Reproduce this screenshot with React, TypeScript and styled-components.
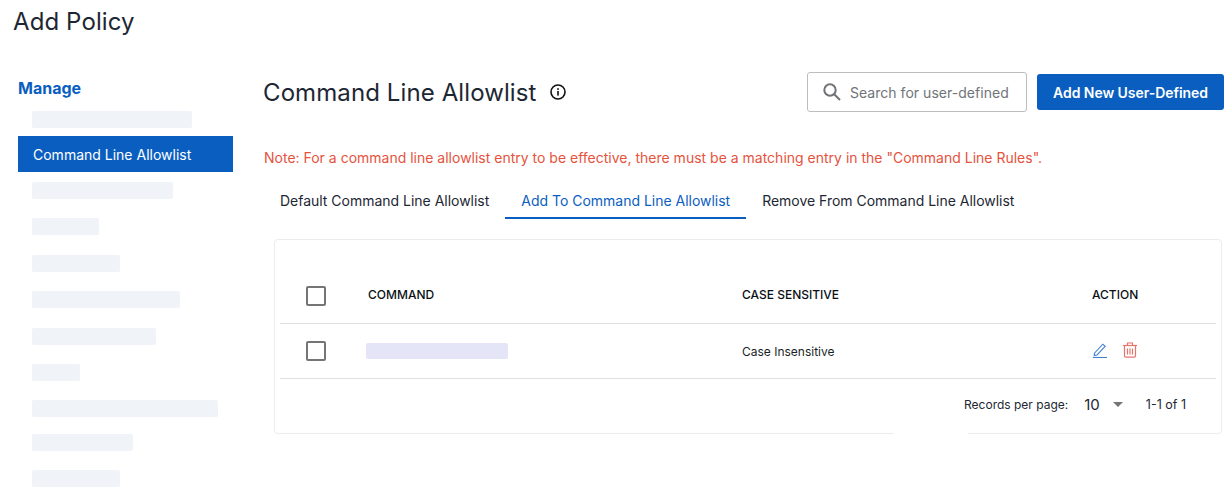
import React from 'react';
import styled, { createGlobalStyle } from 'styled-components';

const GlobalStyle = createGlobalStyle`
  html, body {
    margin: 0;
    padding: 0;
    background: #fff;
    overflow: hidden;
  }
  body {
    font-family: Inter, "Noto Sans", sans-serif;
    color: #1d2733;
  }
  * {
    box-sizing: border-box;
  }
`;

const NAV_ITEMS = [
  { width: 160, gap: 8 },
  { active: true, label: 'Command Line Allowlist', gap: 10 },
  { width: 141, gap: 19 },
  { width: 67, gap: 20 },
  { width: 88, gap: 19 },
  { width: 148, gap: 20 },
  { width: 124, gap: 19 },
  { width: 48, gap: 19 },
  { width: 186, gap: 17 },
  { width: 101, gap: 19 },
  { width: 88, gap: 0 },
];

const TABS = ['Default Command Line Allowlist', 'Add To Command Line Allowlist', 'Remove From Command Line Allowlist'];

export default function App() {
  return (
    <Page>
      <GlobalStyle />
      <PageTitle>Add Policy</PageTitle>
      <Body>
        <Sidebar>
          <SidebarTitle>Manage</SidebarTitle>
          {NAV_ITEMS.map((item, idx) =>
            item.active ? (
              <ActiveItem key={idx} $gap={item.gap}>
                {item.label}
              </ActiveItem>
            ) : (
              <NavBar key={idx} $width={item.width as number} $gap={item.gap} />
            ),
          )}
        </Sidebar>
        <Main>
          <TopRow>
            <Heading>
              <h2>Command Line Allowlist</h2>
              <svg width="16" height="16" viewBox="0 0 16 16" fill="none">
                <circle cx="8" cy="8" r="7" stroke="#111" strokeWidth="1.6" />
                <rect x="7.2" y="7" width="1.6" height="4.6" fill="#111" />
                <rect x="7.2" y="4.2" width="1.6" height="1.7" fill="#111" />
              </svg>
            </Heading>
            <Actions>
              <SearchBox>
                <svg width="20" height="20" viewBox="0 0 20 20" fill="none">
                  <circle cx="8" cy="8" r="5.7" stroke="#6f7276" strokeWidth="2" />
                  <path d="M12.2 12.2 L18 18" stroke="#6f7276" strokeWidth="2" />
                </svg>
                <span>Search for user-defined</span>
              </SearchBox>
              <PrimaryButton>Add New User-Defined</PrimaryButton>
            </Actions>
          </TopRow>
          <Note>
            Note: For a command line allowlist entry to be effective, there must be a matching entry in the "Command Line Rules".
          </Note>
          <Tabs>
            {TABS.map((tab, idx) => (
              <Tab key={tab} $active={idx === 1}>
                {tab}
              </Tab>
            ))}
          </Tabs>
          <Card>
            <HeaderRow>
              <Checkbox />
              <HeadCell>COMMAND</HeadCell>
              <HeadCell>CASE SENSITIVE</HeadCell>
              <HeadCell>ACTION</HeadCell>
            </HeaderRow>
            <DataRow>
              <Checkbox />
              <CommandBar />
              <Cell>Case Insensitive</Cell>
              <IconCell>
                <svg width="16" height="16" viewBox="0 0 16 16" fill="none">
                  <path d="M2.6 11 L10.8 2.2 L13.2 4.4 L5 13 L2.2 13.6 Z" stroke="#3f7fd4" strokeWidth="1.1" />
                  <path d="M0.8 15.5 H15" stroke="#3f7fd4" strokeWidth="1.1" />
                </svg>
                <svg width="16" height="16" viewBox="0 0 16 16" fill="none">
                  <path d="M1 3.5 H15" stroke="#e8736c" strokeWidth="1.2" />
                  <path d="M5.5 3.5 V1 H10.5 V3.5" stroke="#e8736c" strokeWidth="1.2" />
                  <path d="M2.5 3.5 V14 Q2.5 15.2 3.7 15.2 H12.3 Q13.5 15.2 13.5 14 V3.5" stroke="#e8736c" strokeWidth="1.2" />
                  <path d="M5.5 6.5 V12.5 M8 6.5 V12.5 M10.5 6.5 V12.5" stroke="#e8736c" strokeWidth="1.2" />
                </svg>
              </IconCell>
            </DataRow>
            <Pagination>
              <span>Records per page:</span>
              <PageSize>10</PageSize>
              <Caret />
              <PageRange>1-1 of 1</PageRange>
            </Pagination>
            <BorderGap />
          </Card>
        </Main>
      </Body>
    </Page>
  );
}

const Page = styled.div`
  width: 1231px;
  height: 491px;
  overflow: hidden;
  padding-top: 7px;
`;

const PageTitle = styled.h1`
  margin: 0 0 0 13px;
  font-size: 24px;
  line-height: 30px;
  font-weight: 400;
  letter-spacing: 0.1px;
  color: #1d2733;
`;

const Body = styled.div`
  display: flex;
  margin-top: 35px;
  padding-left: 18px;
`;

const Sidebar = styled.nav`
  width: 215px;
  padding-top: 6px;
  flex-shrink: 0;
  display: flex;
  flex-direction: column;
  align-items: flex-start;
`;

const SidebarTitle = styled.div`
  font-size: 16px;
  line-height: 20px;
  font-weight: 700;
  color: #0a5ec0;
  margin-bottom: 13px;
`;

const NavBar = styled.div<{ $width: number; $gap: number }>`
  width: ${(p) => p.$width}px;
  height: 17px;
  margin-left: 14px;
  margin-bottom: ${(p) => p.$gap}px;
  border-radius: 2px;
  background: #f0f3f8;
  flex-shrink: 0;
`;

const ActiveItem = styled.div<{ $gap: number }>`
  width: 215px;
  height: 36px;
  padding-left: 15px;
  margin-bottom: ${(p) => p.$gap}px;
  display: flex;
  align-items: center;
  background: #0a5ec0;
  color: #fff;
  font-size: 14px;
`;

const Main = styled.main`
  margin-left: 30px;
  width: 961px;
`;

const TopRow = styled.div`
  display: flex;
  justify-content: space-between;
  align-items: center;
  height: 40px;
`;

const Heading = styled.div`
  display: flex;
  align-items: center;
  gap: 13px;

  h2 {
    margin: 0;
    padding-top: 1px;
    font-size: 24px;
    line-height: 32px;
    font-weight: 400;
    letter-spacing: 0.1px;
    color: #1d2733;
  }
`;

const Actions = styled.div`
  display: flex;
  align-items: center;
  gap: 10px;
`;

const SearchBox = styled.div`
  width: 220px;
  height: 40px;
  padding-left: 14px;
  display: flex;
  align-items: center;
  gap: 8px;
  border: 1px solid #bdbdbd;
  border-radius: 3px;
  font-size: 14px;
  letter-spacing: 0.03px;
  color: #707479;
`;

const PrimaryButton = styled.button`
  width: 187px;
  height: 36px;
  border: 0;
  border-radius: 3px;
  padding: 0;
  background: #0a5ec0;
  color: #fff;
  font-family: inherit;
  font-size: 14px;
  font-weight: 600;
  letter-spacing: -0.05px;
`;

const Note = styled.p`
  margin: 36px 0 0 1px;
  font-size: 14px;
  line-height: 20px;
  color: #e5533d;
`;

const Tabs = styled.div`
  display: flex;
  margin: 15px 0 0 1px;
`;

const Tab = styled.div<{ $active: boolean }>`
  height: 36px;
  padding: 0 16px;
  display: flex;
  align-items: center;
  font-size: 14px;
  letter-spacing: -0.015px;
  color: ${(p) => (p.$active ? '#0a5ec0' : '#1d2733')};
  border-bottom: 2px solid ${(p) => (p.$active ? '#0a5ec0' : 'transparent')};
`;

const Card = styled.section`
  position: relative;
  margin: 20px 0 0 11px;
  width: 948px;
  height: 195px;
  padding: 0 5px;
  border: 1px solid #ececec;
  border-radius: 4px;
`;

const rowColumns = `
  display: grid;
  grid-template-columns: 62px 374px 350px 1fr;
  align-items: center;
  padding-left: 26px;
  border-bottom: 1px solid #e0e0e0;
`;

const HeaderRow = styled.div`
  ${rowColumns}
  height: 84px;
  padding-top: 28px;
`;

const DataRow = styled.div`
  ${rowColumns}
  height: 55px;
`;

const Checkbox = styled.span`
  width: 20px;
  height: 20px;
  border: 2px solid #757575;
  border-radius: 2px;
`;

const HeadCell = styled.div`
  padding-bottom: 2px;
  font-size: 12px;
  font-weight: 500;
  color: #0b0f14;
`;

const CommandBar = styled.div`
  width: 142px;
  height: 16px;
  margin-left: -2px;
  border-radius: 2px;
  background: #e4e6f7;
`;

const Cell = styled.div`
  font-size: 12px;
  color: #1a1f26;
`;

const IconCell = styled.div`
  display: flex;
  gap: 14px;
  padding-bottom: 2px;
`;

const Pagination = styled.div`
  height: 50px;
  padding-right: 30px;
  display: flex;
  justify-content: flex-end;
  align-items: center;
  font-size: 12px;
  color: #1d2733;
`;

const PageSize = styled.span`
  margin-left: 16px;
  font-size: 15px;
`;

const Caret = styled.span`
  width: 0;
  height: 0;
  margin-left: 13px;
  border-left: 5.5px solid transparent;
  border-right: 5.5px solid transparent;
  border-top: 5px solid #757575;
`;

const PageRange = styled.span`
  margin-left: 23px;
  font-size: 12.5px;
`;

const BorderGap = styled.div`
  position: absolute;
  left: 619px;
  bottom: -1px;
  width: 74px;
  height: 2px;
  background: #fff;
`;
